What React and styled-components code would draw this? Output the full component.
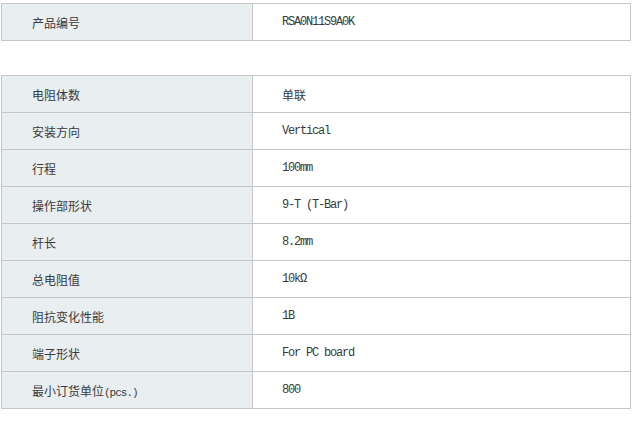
import React from "react";
import styled, { createGlobalStyle } from "styled-components";

const GlobalStyle = createGlobalStyle`
  body {
    margin: 0;
    background: #ffffff;
    font-family: "Noto Sans CJK SC", "Noto Sans", sans-serif;
  }
`;

const Page = styled.div`
  padding: 3px 0 0 1px;
  display: flex;
  flex-direction: column;
  gap: 34px;
`;

const Table = styled.table`
  width: 630px;
  border-collapse: collapse;
  table-layout: fixed;
  border: 1px solid #c6c6c6;
`;

const Row = styled.tr`
  height: 37px;
`;

const Label = styled.td`
  width: 251px;
  box-sizing: border-box;
  padding: 0 0 0 30px;
  background: #e9eef0;
  border: 1px solid #c6c6c6;
  color: #3a3a3a;
  font-size: 12px;
  vertical-align: middle;
`;

const Value = styled.td`
  padding: 0 0 0 29px;
  background: #ffffff;
  border: 1px solid #c6c6c6;
  color: #3a3a3a;
  font-size: 12px;
  font-family: ${(p) =>
    p.$latin
      ? `"Liberation Mono", "Noto Sans CJK SC", monospace`
      : `"Noto Sans CJK SC", sans-serif`};
  letter-spacing: ${(p) => (p.$latin ? "-1.2px" : "0")};
  vertical-align: middle;
`;

const Small = styled.span`
  font-family: "Liberation Mono", monospace;
  font-size: 11px;
  letter-spacing: -1px;
`;

const specs = [
  ["电阻体数", "单联", false],
  ["安装方向", "Vertical", true],
  ["行程", "100mm", true],
  ["操作部形状", "9-T (T-Bar)", true],
  ["杆长", "8.2mm", true],
  ["总电阻值", "10kΩ", true],
  ["阻抗变化性能", "1B", true],
  ["端子形状", "For PC board", true],
];

export default function App() {
  return (
    <>
      <GlobalStyle />
      <Page>
        <Table>
          <tbody>
            <Row>
              <Label>产品编号</Label>
              <Value $latin>RSA0N11S9A0K</Value>
            </Row>
          </tbody>
        </Table>
        <Table>
          <tbody>
            {specs.map(([label, value, latin]) => (
              <Row key={label}>
                <Label>{label}</Label>
                <Value $latin={latin}>{value}</Value>
              </Row>
            ))}
            <Row>
              <Label>
                最小订货单位<Small>(pcs.)</Small>
              </Label>
              <Value $latin>800</Value>
            </Row>
          </tbody>
        </Table>
      </Page>
    </>
  );
}
